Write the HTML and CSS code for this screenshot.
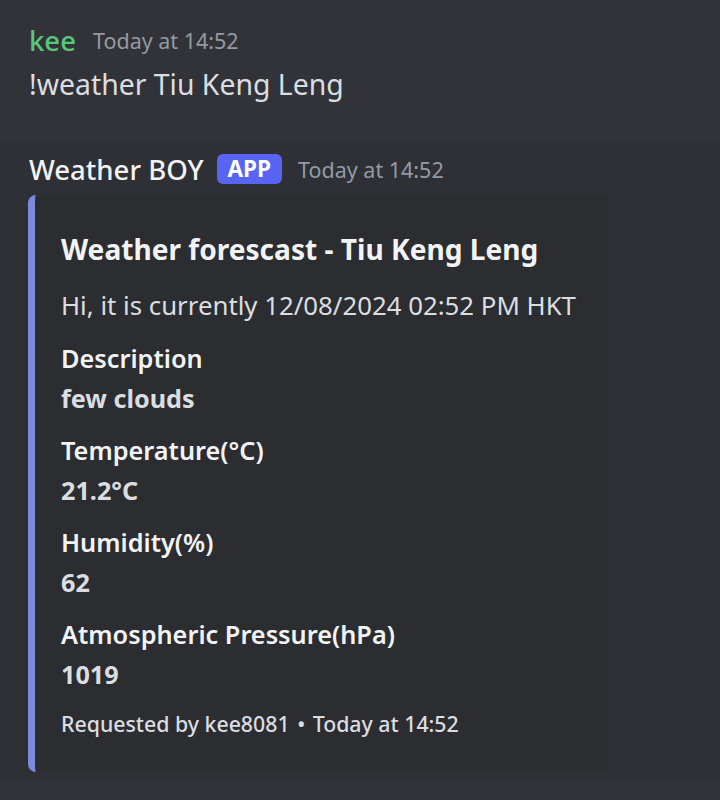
FILE: index.html
```html
<!DOCTYPE html>
<html>
<head>
<meta charset="utf-8">
<link rel="stylesheet" href="styles.css">
</head>
<body>
<div class="chat">
  <div class="message first">
    <div class="header">
      <span class="user user-green">kee</span>
      <span class="time">Today at 14:52</span>
    </div>
    <div class="content">!weather Tiu Keng Leng</div>
  </div>
  <div class="message hovered">
    <div class="header">
      <span class="user">Weather BOY</span>
      <span class="badge">APP</span>
      <span class="time">Today at 14:52</span>
    </div>
    <div class="embed">
      <div class="embed-title">Weather forescast - Tiu Keng Leng</div>
      <div class="embed-desc">Hi, it is currently 12/08/2024 02:52 PM HKT</div>
      <div class="fields">
        <div class="field">
          <div class="field-name">Description</div>
          <div class="field-value">few clouds</div>
        </div>
        <div class="field">
          <div class="field-name">Temperature(°C)</div>
          <div class="field-value">21.2°C</div>
        </div>
        <div class="field">
          <div class="field-name">Humidity(%)</div>
          <div class="field-value">62</div>
        </div>
        <div class="field">
          <div class="field-name">Atmospheric Pressure(hPa)</div>
          <div class="field-value">1019</div>
        </div>
      </div>
      <div class="embed-footer">Requested by kee8081 <span class="dot">•</span> Today at 14:52</div>
    </div>
  </div>
</div>
</body>
</html>
```
FILE: styles.css
```css
html, body {
  margin: 0;
  padding: 0;
  background: #313338;
  height: 100%;
}
body {
  font-family: "Noto Sans", "DejaVu Sans", sans-serif;
  color: #dbdee1;
}
.chat {
  display: flex;
  flex-direction: column;
}
.message {
  padding-left: 29px;
}
.first {
  padding-top: 22px;
  padding-bottom: 40px;
}
.hovered {
  background: #2e3035;
  padding-top: 9px;
  padding-bottom: 8px;
}
.header {
  display: flex;
  align-items: center;
  height: 36px;
  white-space: nowrap;
}
.user {
  font-size: 27.5px;
  font-weight: 500;
  color: #f2f3f5;
}
.user-green {
  color: #57c77a;
}
.time {
  font-size: 21.5px;
  color: #949ba4;
  margin-left: 17px;
}
.badge {
  margin-left: 13px;
  background: #5865f2;
  color: #fff;
  font-size: 22.5px;
  font-weight: 700;
  border-radius: 6px;
  padding: 0 11px;
  height: 30px;
  line-height: 30px;
}
.badge + .time {
  margin-left: 16px;
}
.content {
  margin-top: 8px;
  font-size: 28.4px;
  line-height: 36px;
  color: #dbdee1;
}
.embed {
  margin-top: 8px;
  width: 547px;
  background: #2b2d31;
  border-left: 7px solid #7b8bdb;
  border-radius: 8px;
  padding: 36px 0 34px 26px;
  margin-left: -1px;
}
.embed-title {
  font-size: 28.1px;
  font-weight: 700;
  line-height: 36px;
  color: #f2f3f5;
}
.embed-desc {
  margin-top: 22px;
  font-size: 25.8px;
  line-height: 32px;
  color: #dbdee1;
}
.fields {
  margin-top: 17px;
  display: flex;
  flex-direction: column;
  gap: 12px;
}
.field-name {
  font-size: 25.3px;
  font-weight: 600;
  line-height: 40px;
  color: #f2f3f5;
}
.field-value {
  font-size: 25.2px;
  font-weight: 700;
  line-height: 40px;
  color: #dbdee1;
}
.embed-footer {
  margin-top: 16px;
  font-size: 21.3px;
  line-height: 28px;
  font-weight: 500;
  color: #dbdee1;
}
.dot {
  margin: 0 2px;
}
```
